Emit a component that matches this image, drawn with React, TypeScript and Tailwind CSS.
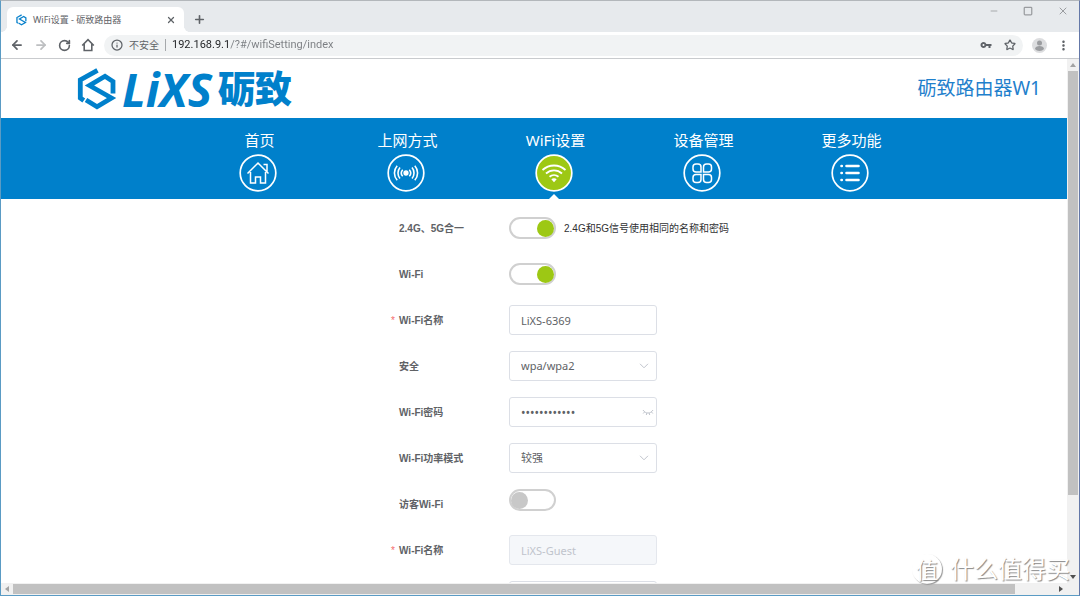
import type { ReactNode } from "react";
import { ArrowLeft, ArrowRight, Info, Minus, Plus, RotateCw, Square, Star, X } from "lucide-react";
import { MdMoreVert, MdVpnKey } from "react-icons/md";

const LogoMark = ({ className }: { className: string }) => (
  <svg viewBox="0 0 40 44" className={className} fill="none" stroke="currentColor" strokeWidth="4.800" aria-hidden="true">
    <path d="M20.500 3.300 3.300 13V31l3.500 2.500" />
    <path d="M36 26.500V14.500L28 9.300 12.500 18.500 34.500 31 20 39.700 9 33" />
  </svg>
);

const HomeIcon = () => (
  <path d="M8.500 19.500 19 9l10.500 10.500M24.500 10.500h3.500v7M11.500 18v11h5v-6h5v6h5V18" />
);

const SignalIcon = () => (
  <>
    <circle cx="19" cy="19" r="1.900" fill="currentColor" />
    <g strokeWidth="1.600">
      <path d="M15.700 15.700a5 5 0 0 0 0 6.600M13 13.500a8.500 8.500 0 0 0 0 11M10.200 11.700a11 11 0 0 0 0 14.600" />
      <path d="M22.300 15.700a5 5 0 0 1 0 6.600M25 13.500a8.500 8.500 0 0 1 0 11M27.800 11.700a11 11 0 0 1 0 14.600" />
    </g>
  </>
);

const WifiIcon = () => (
  <>
    <path strokeWidth="1.800" d="M7.500 16c6.500-6 16.500-6 23 0M11 19.500c4.500-4.300 11.500-4.300 16 0M14.500 22.700c2.600-2.200 6.400-2.200 9 0" />
    <path fill="currentColor" stroke="none" d="M16.300 25.300c1.500-1.300 3.900-1.300 5.400 0L19 28.200z" />
  </>
);

const DevicesIcon = () => (
  <>
    <path d="M18 18h-5a3 3 0 0 1-3-3v-2a3 3 0 0 1 3-3h2a3 3 0 0 1 3 3zM20.500 18h5a3 3 0 0 0 3-3v-2a3 3 0 0 0-3-3h-2a3 3 0 0 0-3 3z" />
    <path d="M18 20.500h-5a3 3 0 0 0-3 3v2a3 3 0 0 0 3 3h2a3 3 0 0 0 3-3zM20.500 20.500h5a3 3 0 0 1 3 3v2a3 3 0 0 1-3 3h-2a3 3 0 0 1-3-3z" />
  </>
);

const MoreIcon = () => (
  <path strokeWidth="2.600" strokeLinecap="round" d="M10.500 12h.3M15.500 12h12M10.500 19h.3M15.500 19h12M10.500 26h.3M15.500 26h12" />
);

type NavItem = { label: string; icon: ReactNode; active?: boolean };

const navItems: NavItem[] = [
  { label: "首页", icon: <HomeIcon /> },
  { label: "上网方式", icon: <SignalIcon /> },
  { label: "WiFi设置", icon: <WifiIcon />, active: true },
  { label: "设备管理", icon: <DevicesIcon /> },
  { label: "更多功能", icon: <MoreIcon /> },
];

const NavLink = ({ label, icon, active }: NavItem) => (
  <a href="#" className="relative flex w-[148px] flex-col items-center pt-3 text-white">
    <span className="pl-[3px] text-[15px] leading-5">{label}</span>
    <svg viewBox="0 0 38 38" className="mt-1 size-[38px]" fill="none" stroke="currentColor" strokeWidth="1.500" aria-hidden="true">
      <circle cx="19" cy="19" r="17.800" strokeWidth="1.700" fill={active ? "#9dc814" : "none"} />
      {icon}
    </svg>
    {active && (
      <span className="absolute bottom-0 left-1/2 -translate-x-1/2 border-x-[5px] border-b-[5px] border-x-transparent border-b-white" />
    )}
  </a>
);

type FieldProps = {
  id: string;
  label: string;
  required?: boolean;
  top?: boolean;
  children: ReactNode;
};

const Field = ({ id, label, required, top, children }: FieldProps) => (
  <div className="flex h-[30px] items-center">
    <label
      htmlFor={id}
      className="relative w-[110px] shrink-0 font-[Liberation_Sans,Noto_Sans_CJK_SC,sans-serif] text-[10px] font-bold whitespace-nowrap text-[#606266]"
    >
      {required && <span className="absolute -left-2 font-normal text-[#f56c6c]">*</span>}
      {label}
    </label>
    <div className={top ? "flex items-center self-start" : "flex items-center"}>{children}</div>
  </div>
);

const Toggle = ({ id, on }: { id: string; on?: boolean }) => (
  <input
    id={id}
    type="checkbox"
    role="switch"
    defaultChecked={on}
    className="flex h-[22px] w-[47px] shrink-0 appearance-none items-center rounded-full border-2 border-[#d0d0d0] bg-white before:size-[17px] before:rounded-full before:bg-[#c8c8c8] checked:justify-end checked:before:bg-[#9dc814]"
  />
);

const box = "h-[30px] w-[148px] rounded-[3px] border border-[#dcdfe6] bg-white px-[11px] text-[#606266]";

const Chevron = () => (
  <svg viewBox="0 0 10 6" className="pointer-events-none absolute right-2 h-[6px] w-[10px] text-[#c0c4cc]" fill="none" stroke="currentColor" aria-hidden="true">
    <path d="M1 .8 5 4.800 9 .8" />
  </svg>
);

const SelectBox = ({ id, label, options }: { id: string; label?: string; options: string[] }) => (
  <div className="relative flex items-center">
    <select id={id} aria-label={label} className={`${box} appearance-none text-[11px]`}>
      {options.map((option) => (
        <option key={option}>{option}</option>
      ))}
    </select>
    <Chevron />
  </div>
);

const BrowserBar = () => (
  <header className="shrink-0 border-b border-[#c9cbce] bg-[#e7eaed] text-[#5f6368]">
    <div className="flex h-[31px] items-end">
      <div className="relative ml-[6px] flex h-[25px] w-[177px] items-center rounded-t-[6px] bg-white pr-2 pl-[9px]">
        <span className="absolute bottom-0 -left-[6px] size-[6px] rounded-br-[6px] shadow-[2px_2px_0_0_#fff]" />
        <span className="absolute -right-[6px] bottom-0 size-[6px] rounded-bl-[6px] shadow-[-2px_2px_0_0_#fff]" />
        <LogoMark className="h-[12px] w-[11px] text-[#0a82cc]" />
        <span className="ml-[6px] flex-1 text-[9px] whitespace-nowrap">WiFi设置 - 砺致路由器</span>
        <button aria-label="关闭标签页"><X className="size-[10px]" strokeWidth={3} /></button>
      </div>
      <button aria-label="新标签页" className="mb-[6px] ml-[9px]"><Plus className="size-[13px]" strokeWidth={3} /></button>
      <div className="mb-[15px] ml-auto flex items-center gap-6 pr-[10px] text-[#9a9ca0]">
        <button aria-label="最小化"><Minus className="size-[10px]" /></button>
        <button aria-label="最大化"><Square className="size-[10px]" strokeWidth={3} /></button>
        <button aria-label="关闭"><X className="size-[12px]" /></button>
      </div>
    </div>
    <div className="flex h-[26px] items-center bg-white pr-2 pl-[9px]">
      <div className="flex gap-[10px]">
        <button aria-label="后退"><ArrowLeft className="size-[14px]" strokeWidth={3} /></button>
        <button aria-label="前进" className="text-[#bdbfc1]"><ArrowRight className="size-[14px]" strokeWidth={3} /></button>
        <button aria-label="刷新"><RotateCw className="size-[13px]" strokeWidth={3} /></button>
        <button aria-label="主页">
          <svg viewBox="0 0 14 14" className="size-[14px]" fill="none" stroke="currentColor" strokeWidth="1.600" aria-hidden="true">
            <path d="M1.200 7.500 7 1.700l5.800 5.800M3.200 6v6.500h7.600V6" />
          </svg>
        </button>
      </div>
      <div className="ml-[9px] flex h-[21px] flex-1 items-center rounded-full bg-[#f1f3f4] pr-[7px] pl-[7px]">
        <Info className="size-[12px]" strokeWidth={2.5} />
        <span className="ml-[6px] text-[10px] whitespace-nowrap">不安全</span>
        <span className="mx-[6px] h-3 w-px bg-[#a5a8ab]" />
        <input
          aria-label="地址"
          defaultValue="192.168.9.1/?#/wifiSetting/index"
          className="flex-1 bg-[linear-gradient(90deg,#202124_58px,#7a7d81_58px)] bg-clip-text font-[Roboto,sans-serif] text-[11px] text-transparent"
        />
        <button aria-label="密码"><MdVpnKey className="size-[12px]" /></button>
        <button aria-label="收藏" className="ml-3"><Star className="size-[12px]" strokeWidth={2.5} /></button>
      </div>
      <button aria-label="账户" className="ml-[9px] text-[#9b9da0]">
        <svg viewBox="0 0 15 15" className="size-[15px]" fill="currentColor" aria-hidden="true">
          <circle cx="7.500" cy="7.500" r="7.500" fill="#dcdddf" />
          <circle cx="7.500" cy="5" r="2.500" />
          <path d="M3 11c0-4 9-4 9 0-2 2.500-7 2.500-9 0z" />
        </svg>
      </button>
      <button aria-label="菜单" className="ml-[9px]"><MdMoreVert className="size-[15px]" /></button>
    </div>
  </header>
);

const WifiForm = () => (
  <form className="mx-auto mt-[14px] flex w-[310px] flex-col gap-4">
    <Field id="merge" label="2.4G、5G合一">
      <Toggle id="merge" on />
      <span className="ml-2 font-[Liberation_Sans,Noto_Sans_CJK_SC,sans-serif] text-[10px] whitespace-nowrap text-[#303133]">
        2.4G和5G信号使用相同的名称和密码
      </span>
    </Field>
    <Field id="wifi" label="Wi-Fi">
      <Toggle id="wifi" on />
    </Field>
    <Field id="ssid" label="Wi-Fi名称" required>
      <input id="ssid" defaultValue="LiXS-6369" className={`${box} text-[11px]`} />
    </Field>
    <Field id="security" label="安全">
      <SelectBox id="security" options={["wpa/wpa2"]} />
    </Field>
    <Field id="password" label="Wi-Fi密码">
      <div className="relative flex items-center">
        <input id="password" type="password" defaultValue="123456789012" className={`${box} text-[12px]`} />
        <svg viewBox="0 0 12 7" className="absolute right-[3px] h-[7px] w-3 text-[#c0c4cc]" fill="none" stroke="currentColor" aria-hidden="true">
          <path d="M1 1c2.500 4 7.500 4 10 0M2.500 3 1.200 4.500M4.800 4l-.5 2M7.200 4l.5 2M9.500 3l1.300 1.500" />
        </svg>
      </div>
    </Field>
    <Field id="power" label="Wi-Fi功率模式">
      <SelectBox id="power" options={["较强"]} />
    </Field>
    <Field id="guest" label="访客Wi-Fi" top>
      <Toggle id="guest" />
    </Field>
    <Field id="guest-ssid" label="Wi-Fi名称" required>
      <input
        id="guest-ssid"
        disabled
        defaultValue="LiXS-Guest"
        className="h-[30px] w-[148px] rounded-[3px] border border-[#e4e7ed] bg-[#f5f7fa] px-[11px] text-[11px] text-[#c0c4cc]"
      />
    </Field>
    <div className="pl-[110px]">
      <SelectBox id="guest-security" label="访客安全" options={[""]} />
    </div>
  </form>
);

export default function App() {
  return (
    <div className="relative flex h-screen flex-col overflow-hidden border border-[#5a9bc4] border-t-[#b3b7bb] border-r-[#6478a8] bg-white font-[Noto_Sans,Noto_Sans_CJK_SC,sans-serif]">
      <BrowserBar />
      <div className="flex min-h-0 flex-1">
        <main className="min-w-0 flex-1 overflow-hidden">
          <div className="w-[calc(100%+40px)]">
            <div className="flex h-[59px] items-center justify-between pr-[66px] pl-[76px]">
              <a href="#" className="flex items-center text-[#0080cb]">
                <LogoMark className="h-[44px] w-[40px]" />
                <span className="ml-[5px] flex items-center font-bold">
                  <span className="text-[46px] leading-none italic">LiXS</span>
                  <span className="ml-[6px] text-[37px] leading-none font-black">砺致</span>
                </span>
              </a>
              <h1 className="text-[19px] text-[#1f80cc]">砺致路由器W1</h1>
            </div>
            <nav className="flex h-[81px] justify-center bg-[#0080cb]">
              {navItems.map((item) => (
                <NavLink key={item.label} {...item} />
              ))}
            </nav>
            <WifiForm />
          </div>
        </main>
        <div className="flex w-3 shrink-0 flex-col items-center bg-[#f1f1f1]">
          <span className="my-[4px] border-x-[3px] border-b-[4px] border-x-transparent border-b-[#a3a3a3]" />
          <span className="h-[81%] w-[10px] bg-[#c1c1c1]" />
          <span className="mt-auto mb-1 border-x-[3px] border-t-[4px] border-x-transparent border-t-[#505050]" />
        </div>
      </div>
      <div className="flex h-3 shrink-0 items-center bg-[#f1f1f1] pr-3">
        <span className="mx-[4px] border-y-[3px] border-r-[4px] border-y-transparent border-r-[#a3a3a3]" />
        <span className="h-[10px] w-[94%] bg-[#c1c1c1]" />
        <span className="mr-1 ml-auto border-y-[3px] border-l-[4px] border-y-transparent border-l-[#505050]" />
      </div>
      <div className="pointer-events-none absolute right-[9px] bottom-[10px] flex items-center gap-2 text-white [text-shadow:1px_1px_1px_#888]">
        <span className="flex size-[30px] items-center justify-center rounded-full text-[22px] leading-none shadow-[1px_1px_1px_#999]">值</span>
        <span className="text-[24px] leading-8">什么值得买</span>
      </div>
    </div>
  );
}
